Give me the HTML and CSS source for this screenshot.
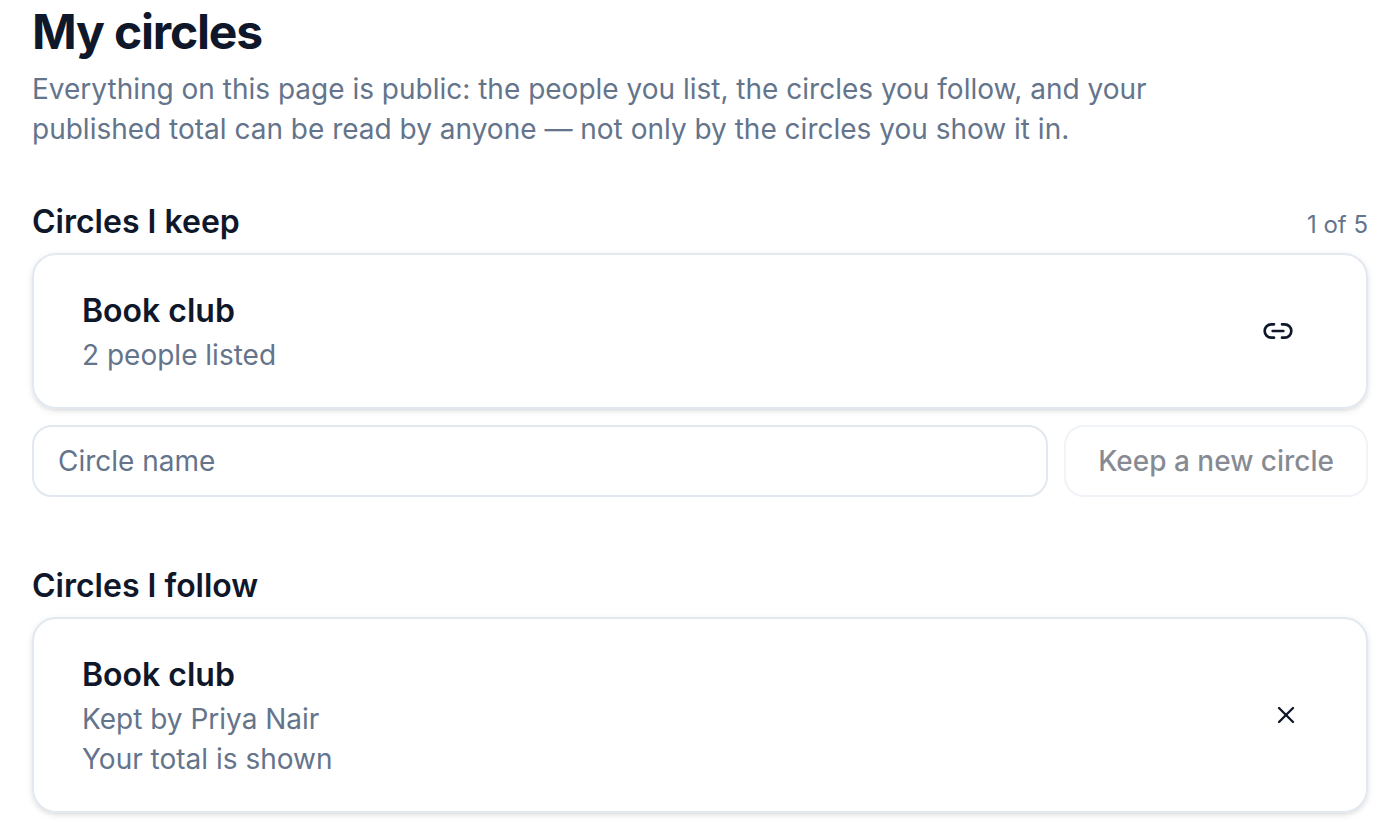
FILE: index.html
```html
<!DOCTYPE html>
<html lang="en">
<head>
  <meta charset="UTF-8">
  <meta name="viewport" content="width=device-width, initial-scale=1">
  <title>My circles</title>
  <link rel="stylesheet" href="styles.css">
</head>
<body>
  <main class="page">
    <header class="page-header">
      <h1>My circles</h1>
      <p>Everything on this page is public: the people you list, the circles you follow, and your published total can be read by anyone — not only by the circles you show it in.</p>
    </header>

    <section class="section">
      <div class="section-head">
        <h2>Circles I keep</h2>
        <span class="count">1 of 5</span>
      </div>
      <div class="card">
        <div class="card-text">
          <h3>Book club</h3>
          <p>2 people listed</p>
        </div>
        <button class="icon-btn link-btn" type="button" aria-label="Copy link">
          <svg width="32" height="32" viewBox="0 0 24 24">
            <path d="M9 17H7A5 5 0 0 1 7 7h2"/>
            <path d="M15 7h2a5 5 0 1 1 0 10h-2"/>
            <path d="M8 12h8"/>
          </svg>
        </button>
      </div>
      <form class="new-circle">
        <input type="text" placeholder="Circle name" aria-label="Circle name">
        <button type="submit" disabled>Keep a new circle</button>
      </form>
    </section>

    <section class="section">
      <div class="section-head">
        <h2>Circles I follow</h2>
      </div>
      <div class="card">
        <div class="card-text">
          <h3>Book club</h3>
          <p>Kept by Priya Nair</p>
          <p>Your total is shown</p>
        </div>
        <button class="icon-btn close-btn" type="button" aria-label="Stop following">
          <svg width="28" height="28" viewBox="0 0 24 24">
            <path d="M18 6 6 18"/>
            <path d="m6 6 12 12"/>
          </svg>
        </button>
      </div>
    </section>
  </main>
</body>
</html>
```

FILE: styles.css
```css
* { box-sizing: border-box; margin: 0; padding: 0; }
body {
  font-family: Inter, sans-serif;
  font-size: 28px;
  line-height: 40px;
  background: #fff;
  color: #0f172a;
}

.page { padding: 0 32px 7px; }

.page-header {
  display: flex;
  flex-direction: column;
  gap: 5px;
  margin-bottom: 48px;
}
.page-header h1 {
  font-size: 48px;
  line-height: 64px;
  font-weight: 700;
  letter-spacing: -0.025em;
}
.page-header p {
  max-width: 1152px;
  color: #64748b;
}

.section + .section { margin-top: 64px; }
.section-head {
  display: flex;
  align-items: baseline;
  justify-content: space-between;
  margin-bottom: 6px;
}
.section-head h2 {
  font-size: 32px;
  line-height: 50px;
  font-weight: 600;
}
.count {
  font-size: 24px;
  line-height: 32px;
  color: #64748b;
}

.card {
  display: flex;
  align-items: center;
  justify-content: space-between;
  padding: 32px 48px;
  border: 2px solid #e2e8f0;
  border-radius: 24px;
  box-shadow: 0 2px 6px rgba(0, 0, 0, 0.1), 0 2px 4px -2px rgba(0, 0, 0, 0.1);
}
.card h3 {
  font-size: 32px;
  line-height: 48px;
  font-weight: 600;
}
.card p { color: #64748b; }

.icon-btn {
  display: flex;
  align-items: center;
  justify-content: center;
  height: 64px;
  border: none;
  background: none;
  color: inherit;
  cursor: pointer;
}
.link-btn { width: 80px; }
.close-btn { width: 64px; }
.icon-btn svg {
  fill: none;
  stroke: currentColor;
  stroke-width: 2;
  stroke-linecap: round;
  stroke-linejoin: round;
}

.new-circle {
  display: flex;
  gap: 16px;
  margin-top: 16px;
}
.new-circle input,
.new-circle button {
  height: 72px;
  border: 2px solid #e2e8f0;
  border-radius: 20px;
  background: #fff;
  font: inherit;
}
.new-circle input {
  flex: 1;
  min-width: 0;
  padding: 0 24px;
}
.new-circle input::placeholder { color: #64748b; }
.new-circle button {
  padding: 0 32px;
  color: #0f172a;
  font-weight: 500;
}
.new-circle button:disabled { opacity: 0.5; }
```
